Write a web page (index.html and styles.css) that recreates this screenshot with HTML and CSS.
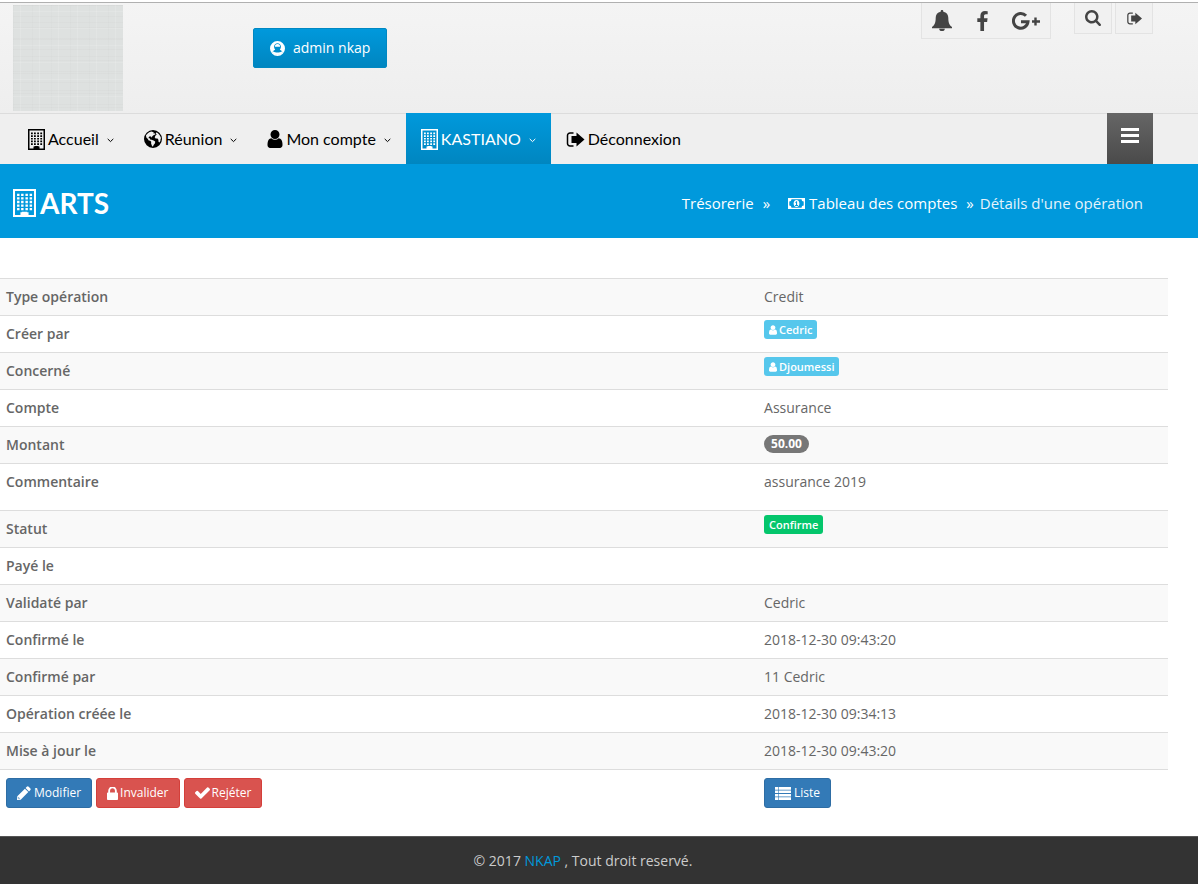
FILE: index.html
```
<!DOCTYPE html>
<html lang="fr">
<head>
<meta charset="utf-8">
<meta name="viewport" content="width=device-width, initial-scale=1">
<title>Détails d'une opération</title>
<link rel="stylesheet" href="styles.css">
</head>
<body>
<svg class="sprite" aria-hidden="true">
  <symbol id="i-building" viewBox="0 0 17 21" preserveAspectRatio="none"><path fill-rule="evenodd" d="M0 0h17v21H0zM1.500 1.500v18h4v-2h6v2h4v-18z"/><path d="M3 3.500h1.800v1.700H3zM6 3.500h1.800v1.700H6zM9.200 3.500h1.800v1.700H9.200zM12.300 3.500h1.800v1.700h-1.800zM3 6.200h1.800v1.700H3zM6 6.200h1.800v1.700H6zM9.200 6.200h1.800v1.700H9.200zM12.300 6.200h1.800v1.700h-1.800zM3 8.900h1.800v1.700H3zM6 8.900h1.800v1.700H6zM9.200 8.900h1.800v1.700H9.200zM12.300 8.900h1.800v1.700h-1.800zM3 11.600h1.800v1.700H3zM6 11.600h1.800v1.700H6zM9.200 11.600h1.800v1.700H9.200zM12.300 11.600h1.800v1.700h-1.800zM3 14.300h1.800v1.700H3zM6 14.300h1.800v1.700H6zM9.200 14.300h1.800v1.700H9.200zM12.300 14.300h1.800v1.700h-1.800zM6.500 17h4v3h-4z"/></symbol>
  <symbol id="i-user" viewBox="256 128 1280 1536"><path d="M1536 1399q0 109-62.500 187t-150.500 78h-854q-88 0-150.500-78t-62.500-187q0-85 8.500-160.500t31.500-152 58.500-131 94-89 134.500-34.500q131 128 313 128t313-128q76 0 134.500 34.500t94 89 58.500 131 31.500 152 8.500 160.500zm-256-887q0 159-112.500 271.500t-271.500 112.500-271.500-112.500-112.500-271.500 112.500-271.500 271.500-112.500 271.500 112.500 112.500 271.500z"/></symbol>
  <symbol id="i-user-circle" viewBox="0 0 16 16"><path fill-rule="evenodd" d="M8 0a8 8 0 1 1 0 16A8 8 0 0 1 8 0zM8 2.300C5.900 2.300 4.300 4 4.300 6.200c0 1.200.5 2.200 1.200 3C4.100 9.600 3 10.700 2.800 12a6.800 6.800 0 0 0 10.400 0c-.2-1.300-1.300-2.400-2.700-2.800.7-.8 1.200-1.800 1.200-3C11.700 4 10.100 2.300 8 2.300z"/><path d="M8 3.300a2.700 2.700 0 0 1 2.700 2.900H5.300A2.700 2.700 0 0 1 8 3.300zM3.500 11c1.300 1.200 2.700 1.300 4.500 1.300s3.200-.1 4.500-1.300l.5 1.700A6.800 6.800 0 0 1 8 15a6.800 6.800 0 0 1-5-2.300z"/></symbol>
  <symbol id="i-globe" viewBox="0 0 18 18"><path fill-rule="evenodd" d="M9 0a9 9 0 1 1 0 18A9 9 0 0 1 9 0zM7.500 1.400C5 2 3 3.300 1.900 5.600l.6 2.200 1.200 1 1 1.600 1.500.4 1 1-.1 1.700 1 2.700.9.300.6-1.600 1.400-1.700.2-1.700-1.600-.9-2-.8-1.500-.2-.3-1.300-1.200-.1.200-1.300 1.200-.6 1.200.4.600 1 .5-1.500 1.600-1.300 1.500-.5-.8-1.200-1.200.200.300-1.100zM12.500 2.200l-.9 1.800 1.300.6-1.400 1-.8 1.600.9 1.300 1.900-.1.900 1.300.1 2 .9.900 1-1.600.1-1.500.5-1.500C16 5.200 14.600 3.200 12.500 2.200z"/></symbol>
  <symbol id="i-out" viewBox="0 0 18 15"><path d="M7 1H3.500A2.500 2.500 0 0 0 1 3.500v8A2.500 2.500 0 0 0 3.500 14H7" fill="none" stroke="currentColor" stroke-width="1.500"/><path d="M5 4h5V.5l8 7-8 7V11H5z"/></symbol>
  <symbol id="i-chev" viewBox="0 0 7 5"><path d="M.7.900l2.800 2.700L6.300.900" fill="none" stroke="currentColor" stroke-width="1"/></symbol>
  <symbol id="i-bell" viewBox="0 0 20 21"><path d="M10 0c.8 0 1.300.5 1.300 1.200v.5c3.300.6 5 3 5 6 0 4.800 1 7.200 3.700 9.300v1.200H0V17c2.700-2.100 3.700-4.500 3.700-9.300 0-3 1.700-5.400 5-6v-.5C8.700.5 9.200 0 10 0zM7.200 18.700h5.600a2.800 2.300 0 0 1-5.600 0z"/></symbol>
  <symbol id="i-fb" viewBox="479 0 864 1664"><path d="M1343 12v264h-157q-86 0-116 36t-30 108v189h293l-39 296h-254v759h-306v-759h-255v-296h255v-218q0-186 104-288.500t277-102.500q147 0 228 12z"/></symbol>
  <symbol id="i-gplus" viewBox="0 0 28 18"><path d="M14 3.800A7.300 7.300 0 1 0 16 9.800H9" fill="none" stroke="currentColor" stroke-width="3"/><path d="M22.300 5.500h2.400v2.800H28v2.400h-3.300v2.800h-2.400v-2.800H20V8.300h2.300z"/></symbol>
  <symbol id="i-search" viewBox="64 128 1664 1664"><path d="M1216 832q0-185-131.500-316.500t-316.500-131.500-316.500 131.500-131.500 316.500 131.500 316.500 316.500 131.500 316.500-131.500 131.500-316.500zm512 832q0 52-38 90t-90 38q-54 0-90-38l-343-342q-179 124-399 124-143 0-273.500-55.500t-225-150-150-225-55.500-273.500 55.500-273.500 150-225 225-150 273.500-55.500 273.500 55.500 225 150 150 225 55.500 273.500q0 220-124 399l343 343q37 37 37 90z"/></symbol>
  <symbol id="i-bars" viewBox="0 0 18 15"><path d="M0 0h18v3H0zM0 6h18v3H0zM0 12h18v3H0z"/></symbol>
  <symbol id="i-money" viewBox="0 0 17 11"><path fill-rule="evenodd" d="M0 0h17v11H0zM3.500 1.300a2.200 2.200 0 0 1-2.200 2.200v4a2.200 2.200 0 0 1 2.200 2.200h10a2.200 2.200 0 0 1 2.200-2.200v-4a2.200 2.200 0 0 1-2.200-2.200zM8.500 2c1.800 0 2.900 1.600 2.900 3.500S10.300 9 8.500 9 5.600 7.400 5.600 5.500 6.700 2 8.500 2zM7.200 4.400l.5.600.3-.2v2.300h-.9V8H10v-.9h-.9V3.300h-.8z"/></symbol>
  <symbol id="i-pencil" viewBox="0 0 14 14"><path fill-rule="evenodd" d="M9.800.8a1.300 1.300 0 0 1 1.900 0l1.500 1.500a1.300 1.300 0 0 1 0 1.900L12 5.400 8.600 2zM7.900 2.700l3.400 3.400-7.600 7.600L0 14l.3-3.700zM1.400 11l-.2 1.200.6.600L3 12.600z"/></symbol>
  <symbol id="i-lock" viewBox="320 192 1152 1344"><path d="M640 768h512v-192q0-106-75-181t-181-75-181 75-75 181v192zm832 96v576q0 40-28 68t-68 28h-960q-40 0-68-28t-28-68v-576q0-40 28-68t68-28h32v-192q0-184 132-316t316-132 316 132 132 316v192h32q40 0 68 28t28 68z"/></symbol>
  <symbol id="i-check" viewBox="121 334 1550 1188"><path d="M1671 566q0 40-28 68l-724 724-136 136q-28 28-68 28t-68-28l-136-136-362-362q-28-28-28-68t28-68l136-136q28-28 68-28t68 28l294 295 656-657q28-28 68-28t68 28l136 136q28 28 28 68z"/></symbol>
  <symbol id="i-list" viewBox="0 0 16 13"><path d="M0 0h3v2.700H0zM3.600 0H16v2.700H3.600zM0 3.400h3v2.700H0zM3.600 3.400H16v2.700H3.600zM0 6.900h3v2.700H0zM3.600 6.900H16v2.700H3.600zM0 10.300h3V13H0zM3.600 10.300H16V13H3.600z"/></symbol>
</svg>

<header class="header">
  <div class="logo"></div>
  <button class="account" type="button"><svg class="icon ic-15" aria-hidden="true"><use href="#i-user-circle"/></svg>admin nkap</button>
  <div class="tools">
    <div class="social">
      <a href="#" aria-label="Notifications"><svg class="icon ic-bell"><use href="#i-bell"/></svg></a>
      <a href="#" aria-label="Facebook"><svg class="icon ic-fb"><use href="#i-fb"/></svg></a>
      <a href="#" aria-label="Google+"><svg class="icon ic-gplus"><use href="#i-gplus"/></svg></a>
    </div>
    <button class="tool" type="button" aria-label="Rechercher"><svg class="icon ic-16"><use href="#i-search"/></svg></button>
    <button class="tool" type="button" aria-label="Quitter"><svg class="icon ic-out-s"><use href="#i-out"/></svg></button>
  </div>
</header>

<nav class="nav">
  <a class="nav-item" href="#"><svg class="icon ic-building"><use href="#i-building"/></svg>Accueil<svg class="icon ic-chev"><use href="#i-chev"/></svg></a>
  <a class="nav-item" href="#"><svg class="icon ic-18"><use href="#i-globe"/></svg>Réunion<svg class="icon ic-chev"><use href="#i-chev"/></svg></a>
  <a class="nav-item" href="#"><svg class="icon ic-user"><use href="#i-user"/></svg>Mon compte<svg class="icon ic-chev"><use href="#i-chev"/></svg></a>
  <a class="nav-item active" href="#"><svg class="icon ic-building"><use href="#i-building"/></svg>KASTIANO<svg class="icon ic-chev"><use href="#i-chev"/></svg></a>
  <a class="nav-item" href="#"><svg class="icon ic-out"><use href="#i-out"/></svg>Déconnexion</a>
  <button class="menu" type="button" aria-label="Menu"><svg class="icon ic-bars"><use href="#i-bars"/></svg></button>
</nav>

<section class="banner">
  <h1 class="title"><svg class="icon ic-title"><use href="#i-building"/></svg>ARTS</h1>
  <div class="crumbs">
    <a href="#">Trésorerie</a><span class="sep first">»</span>
    <a href="#"><svg class="icon ic-money"><use href="#i-money"/></svg>Tableau des comptes</a><span class="sep">»</span>
    <span class="current">Détails d'une opération</span>
  </div>
</section>

<main class="main">
  <table class="details">
    <tbody>
      <tr><th scope="row">Type opération</th><td>Credit</td></tr>
      <tr><th scope="row">Créer par</th><td class="tag"><span class="label info"><svg class="icon ic-tag"><use href="#i-user"/></svg>Cedric</span></td></tr>
      <tr><th scope="row">Concerné</th><td class="tag"><span class="label info"><svg class="icon ic-tag"><use href="#i-user"/></svg>Djoumessi</span></td></tr>
      <tr><th scope="row">Compte</th><td>Assurance</td></tr>
      <tr><th scope="row">Montant</th><td><span class="badge">50.00</span></td></tr>
      <tr class="comment"><th scope="row">Commentaire</th><td>assurance 2019</td></tr>
      <tr><th scope="row">Statut</th><td class="tag"><span class="label success">Confirme</span></td></tr>
      <tr><th scope="row">Payé le</th><td></td></tr>
      <tr><th scope="row">Validaté par</th><td>Cedric</td></tr>
      <tr><th scope="row">Confirmé le</th><td>2018-12-30 09:43:20</td></tr>
      <tr><th scope="row">Confirmé par</th><td>11 Cedric</td></tr>
      <tr><th scope="row">Opération créée le</th><td>2018-12-30 09:34:13</td></tr>
      <tr><th scope="row">Mise à jour le</th><td>2018-12-30 09:43:20</td></tr>
      <tr class="actions">
        <td><div class="buttons">
          <button class="btn primary" type="button"><svg class="icon ic-14"><use href="#i-pencil"/></svg>Modifier</button>
          <button class="btn danger" type="button"><svg class="icon ic-lock"><use href="#i-lock"/></svg>Invalider</button>
          <button class="btn danger" type="button"><svg class="icon ic-check"><use href="#i-check"/></svg>Rejéter</button>
        </div></td>
        <td><div class="buttons"><button class="btn primary" type="button"><svg class="icon ic-list"><use href="#i-list"/></svg>Liste</button></div></td>
      </tr>
    </tbody>
  </table>
</main>

<footer class="footer">© 2017 <a href="#">NKAP</a> , Tout droit reservé.</footer>
</body>
</html>
```
FILE: styles.css
```
* { box-sizing: border-box; }
html { height: 100%; }
body {
  margin: 0;
  min-height: 100%;
  display: flex;
  flex-direction: column;
  background: #fff;
  color: #666;
  font: 14px/20px "Open Sans", sans-serif;
}
a { color: inherit; text-decoration: none; }
button { font: inherit; color: inherit; margin: 0; cursor: pointer; }
.sprite { display: none; }
.icon { display: block; flex: none; fill: currentColor; }
.ic-14 { width: 14px; height: 14px; }
.ic-15 { width: 15px; height: 15px; }
.ic-16 { width: 16px; height: 16px; }
.ic-18 { width: 18px; height: 18px; }
.ic-bell { width: 20px; height: 21px; }
.ic-fb { width: 11px; height: 20px; }
.ic-gplus { width: 28px; height: 18px; }
.ic-out-s { width: 15px; height: 13px; }
.ic-out { width: 19px; height: 15px; }
.ic-building { width: 17px; height: 21px; }
.ic-user { width: 16px; height: 18px; }
.ic-chev { width: 7px; height: 5px; }
.ic-bars { width: 18px; height: 15px; }
.ic-title { width: 23px; height: 28px; }
.ic-money { width: 17px; height: 11px; }
.ic-tag { width: 8px; height: 10px; }
.ic-lock { width: 11px; height: 13px; }
.ic-check { width: 15px; height: 12px; }
.ic-list { width: 16px; height: 13px; }

.header {
  display: flex;
  align-items: flex-start;
  margin-top: 2px;
  padding: 0 45px 2px 13px;
  border-top: 1px solid #b0b0b0;
  background: linear-gradient(#f4f4f4, #eee);
}
.logo {
  width: 110px;
  height: 106px;
  margin-top: 2px;
  background:
    repeating-linear-gradient(90deg, rgba(0, 0, 0, .01) 0 1px, transparent 1px 7px, rgba(255, 255, 255, .12) 7px 8px, transparent 8px 19px),
    repeating-linear-gradient(rgba(0, 0, 0, .015) 0 1px, transparent 1px 6px, rgba(255, 255, 255, .12) 6px 7px, transparent 7px 17px),
    repeating-linear-gradient(rgba(0, 0, 0, .015) 0 1px, transparent 1px 11px),
    #dee1e0;
}
.account {
  display: flex;
  align-items: center;
  gap: 8px;
  height: 40px;
  margin: 25px 0 0 130px;
  padding: 0 16px;
  border: 1px solid #0088c2;
  border-radius: 2px;
  background: linear-gradient(#0099dc, #0086c0);
  color: #fff;
}
.tools { display: flex; margin-left: auto; color: #444; }
.social {
  display: flex;
  align-items: center;
  justify-content: space-between;
  width: 130px;
  height: 36px;
  margin-right: 23px;
  padding: 0 10px;
  border: 1px solid #e3e3e3;
  border-top: 0;
  background: #f1f1f1;
}
.tool {
  display: flex;
  align-items: center;
  justify-content: center;
  width: 38px;
  height: 31px;
  margin-left: 3px;
  padding: 0;
  border: 1px solid #e3e3e3;
  border-top: 0;
  background: #f1f1f1;
}
.social + .tool { margin-left: 0; }

.nav {
  display: flex;
  height: 51px;
  padding: 0 45px 0 13px;
  background: linear-gradient(#dcdcdc 0 1px, #efefef 1px);
  color: #000;
  font: 16px/20px Lato, sans-serif;
}
.nav-item { display: flex; align-items: center; gap: 3px; padding: 1px 15px 0; }
.nav-item .ic-chev { margin: 2px 0 0 5px; }
.nav-item.active { background: linear-gradient(#0099dc, #0086c0); color: #fff; }
.menu {
  display: flex;
  justify-content: center;
  width: 46px;
  margin-left: auto;
  padding: 15px 0 0;
  border: 0;
  background: linear-gradient(#666, #4a4a4a);
  color: #fff;
}

.banner {
  display: flex;
  align-items: center;
  justify-content: space-between;
  min-height: 74px;
  padding: 4px 55px 0 13px;
  background: #0099dc;
  color: #fff;
}
.title { display: flex; align-items: center; gap: 4px; margin: 0; font: bold 28px/36px Lato, sans-serif; }
.crumbs { display: flex; align-items: center; font-size: 15px; font-weight: 500; }
.crumbs a { display: flex; align-items: center; gap: 4px; }
.sep { margin: 0 6px 0 9px; }
.sep.first { margin-right: 18px; }
.current { color: #e5f3fb; }

.main { flex: 1; padding: 40px 30px 20px 0; }
.details { width: 100%; table-layout: fixed; border-collapse: separate; border-spacing: 0; }
.details th, .details td {
  height: 37px;
  padding: 8px 6px;
  border-top: 1px solid #ddd;
  text-align: left;
  vertical-align: top;
}
.details th { width: 64.9%; font-weight: 600; }
.details tr:nth-child(odd) > * { background: #f9f9f9; }
.details .comment > * { height: 47px; }
.details .tag { padding: 4px 6px; }
.label {
  display: flex;
  align-items: center;
  gap: 2px;
  width: fit-content;
  height: 19px;
  padding: 0 5px;
  border-radius: 3px;
  color: #fff;
  font-size: 11px;
  font-weight: 600;
}
.info { background: #56c7ec; }
.success { background: #04c66c; }
.badge {
  display: block;
  width: fit-content;
  padding: 0 7px;
  border-radius: 10px;
  background: #777;
  color: #fff;
  font-size: 12px;
  font-weight: 700;
  line-height: 18px;
}
.buttons { display: flex; gap: 4px; }
.btn {
  display: flex;
  align-items: center;
  gap: 3px;
  height: 30px;
  padding: 0 10px;
  border: 1px solid;
  border-radius: 3px;
  color: #fff;
  font-size: 12px;
}
.btn.danger { gap: 2px; }
.primary { background: #337ab7; border-color: #2e6da4; }
.danger { background: #d9534f; border-color: #d43f3a; }

.footer {
  padding: 14px 32px 13px 0;
  border-top: 1px solid #555;
  background: #333;
  color: #ccc;
  text-align: center;
}
.footer a { color: #0099dc; }
```
